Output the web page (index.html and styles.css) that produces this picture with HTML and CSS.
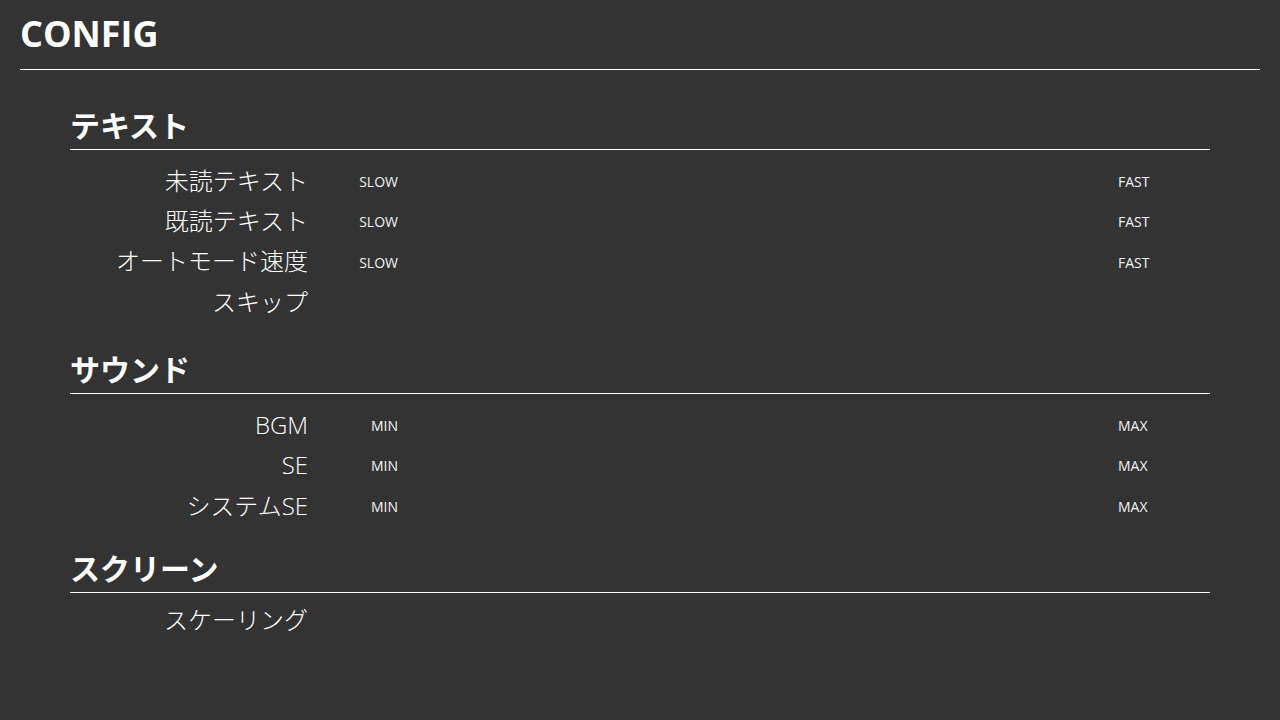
FILE: index.html
```html
<!DOCTYPE html>
<html lang="ja">
<head>
<meta charset="utf-8">
<title>CONFIG</title>
<link rel="stylesheet" href="styles.css">
</head>
<body>
<header class="page-header">
  <h1 class="page-title">CONFIG</h1>
</header>
<main class="config">
  <section class="section section--first">
    <h2 class="section-title">テキスト</h2>
    <div class="rows">
      <div class="row">
        <div class="row-label">未読テキスト</div>
        <div class="range-min">SLOW</div>
        <div class="range-track"></div>
        <div class="range-max">FAST</div>
      </div>
      <div class="row">
        <div class="row-label">既読テキスト</div>
        <div class="range-min">SLOW</div>
        <div class="range-track"></div>
        <div class="range-max">FAST</div>
      </div>
      <div class="row">
        <div class="row-label">オートモード速度</div>
        <div class="range-min">SLOW</div>
        <div class="range-track"></div>
        <div class="range-max">FAST</div>
      </div>
      <div class="row row--toggle">
        <div class="row-label">スキップ</div>
      </div>
    </div>
  </section>
  <section class="section">
    <h2 class="section-title">サウンド</h2>
    <div class="rows">
      <div class="row">
        <div class="row-label">BGM</div>
        <div class="range-min">MIN</div>
        <div class="range-track"></div>
        <div class="range-max">MAX</div>
      </div>
      <div class="row">
        <div class="row-label">SE</div>
        <div class="range-min">MIN</div>
        <div class="range-track"></div>
        <div class="range-max">MAX</div>
      </div>
      <div class="row">
        <div class="row-label">システムSE</div>
        <div class="range-min">MIN</div>
        <div class="range-track"></div>
        <div class="range-max">MAX</div>
      </div>
    </div>
  </section>
  <section class="section section--last">
    <h2 class="section-title">スクリーン</h2>
    <div class="rows">
      <div class="row row--select">
        <div class="row-label">スケーリング</div>
      </div>
    </div>
  </section>
</main>
</body>
</html>
```

FILE: styles.css
```css
html, body {
  margin: 0;
  padding: 0;
}

body {
  background: #333333;
  color: #ffffff;
  font-family: "Open Sans", "Noto Sans CJK JP", sans-serif;
  width: 1280px;
  height: 720px;
  overflow: hidden;
}

.page-header {
  margin: 0 20px;
  padding: 9px 0 11px;
  border-bottom: 1px solid #ffffff;
}

.page-title {
  margin: 0;
  font-size: 36px;
  font-weight: 700;
  line-height: 49px;
}

.config {
  margin: 0 70px;
}

.section {
  margin-top: 22px;
}

.section--first {
  margin-top: 36px;
}

.section--last {
  margin-top: 23px;
}

.section-title {
  margin: 0;
  font-size: 30px;
  font-weight: 700;
  line-height: 40px;
  padding-bottom: 3px;
  border-bottom: 1px solid #ffffff;
}

.rows {
  padding-top: 10.6px;
}

.row {
  display: grid;
  grid-template-columns: 238px 90px 1fr 92px;
  align-items: center;
  height: 40.4px;
}

.row--toggle {
  height: 46.4px;
  align-items: start;
}

.row--select {
  height: 32px;
  align-items: start;
}

.row-label {
  font-size: 24px;
  line-height: 40.4px;
  text-align: right;
  font-weight: 300;
}

.row--select .row-label {
  line-height: 31px;
}

.range-min,
.range-max {
  font-size: 14px;
  font-weight: 400;
  line-height: 20px;
  padding-top: 2px;
  color: #f2f2f2;
}

.range-min {
  text-align: right;
}

.range-max {
  text-align: left;
}

.range-track {
  height: 20px;
}
```
